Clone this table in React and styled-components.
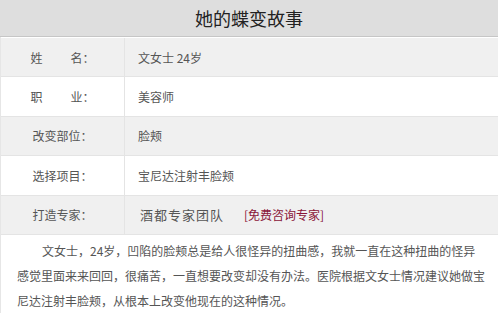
import styled, { createGlobalStyle } from "styled-components";

const GlobalStyle = createGlobalStyle`
  body {
    margin: 0;
    background: #fff;
    font-family: "Noto Sans CJK SC", "Noto Sans", "Liberation Sans", sans-serif;
  }
`;

const Story = styled.section`
  width: 498px;
  height: 318px;
  overflow: hidden;
  background: #fff;
`;

const Title = styled.h2`
  margin: 0;
  height: 36px;
  line-height: 36px;
  background: #dedede;
  border-bottom: 1px solid #c6c6c6;
  text-align: center;
  font-size: 18px;
  font-weight: 400;
  color: #222;
`;

const Body = styled.div`
  border-left: 1px solid #e6e6e6;
  padding-top: 1px;
`;

const Row = styled.div`
  display: grid;
  grid-template-columns: 124px 1fr;
  height: 38.4px;
  border-bottom: 1px solid #e4e4e4;
  background: ${({ $shaded }) => ($shaded ? "#f0f0f0" : "#fff")};

  &:last-child {
    border-bottom: none;
  }
`;

const Label = styled.div`
  display: flex;
  align-items: center;
  justify-content: center;
  border-right: 1px solid #e4e4e4;
  font-size: 12px;
  color: #555;
`;

const Gap = styled.span`
  display: inline-block;
  width: 28px;
`;

const Value = styled.div`
  display: flex;
  align-items: center;
  padding-left: 13px;
  font-size: 12px;
  color: #555;
`;

const Team = styled.span`
  font-size: 13px;
  letter-spacing: 1px;
  color: #555;
  margin-left: 2px;
`;

const Consult = styled.span`
  margin-left: 20px;
  font-size: 12px;
  color: #8a1538;
`;

const Intro = styled.p`
  margin: 0;
  padding: 3px 12.5px 0 16px;
  font-size: 12px;
  line-height: 25px;
  text-indent: 25px;
  color: #555;
`;

const rows = [
  { label: ["姓", "名："], value: "文女士 24岁" },
  { label: ["职", "业："], value: "美容师" },
  { label: ["改变部位："], value: "脸颊" },
  { label: ["选择项目："], value: "宝尼达注射丰脸颊" },
];

export default function App() {
  return (
    <>
      <GlobalStyle />
      <Story>
        <Title>她的蝶变故事</Title>
        <Body>
          {rows.map((r, i) => (
            <Row key={r.value} $shaded={i % 2 === 0}>
              <Label>
                {r.label[0]}
                {r.label[1] && (
                  <>
                    <Gap />
                    {r.label[1]}
                  </>
                )}
              </Label>
              <Value>{r.value}</Value>
            </Row>
          ))}
          <Row $shaded>
            <Label>打造专家：</Label>
            <Value>
              <Team>酒都专家团队</Team>
              <Consult>[免费咨询专家]</Consult>
            </Value>
          </Row>
          <Intro>
            文女士，24岁，凹陷的脸颊总是给人很怪异的扭曲感，我就一直在这种扭曲的怪异感觉里面来来回回，很痛苦，一直想要改变却没有办法。医院根据文女士情况建议她做宝尼达注射丰脸颊，从根本上改变他现在的这种情况。
          </Intro>
        </Body>
      </Story>
    </>
  );
}
